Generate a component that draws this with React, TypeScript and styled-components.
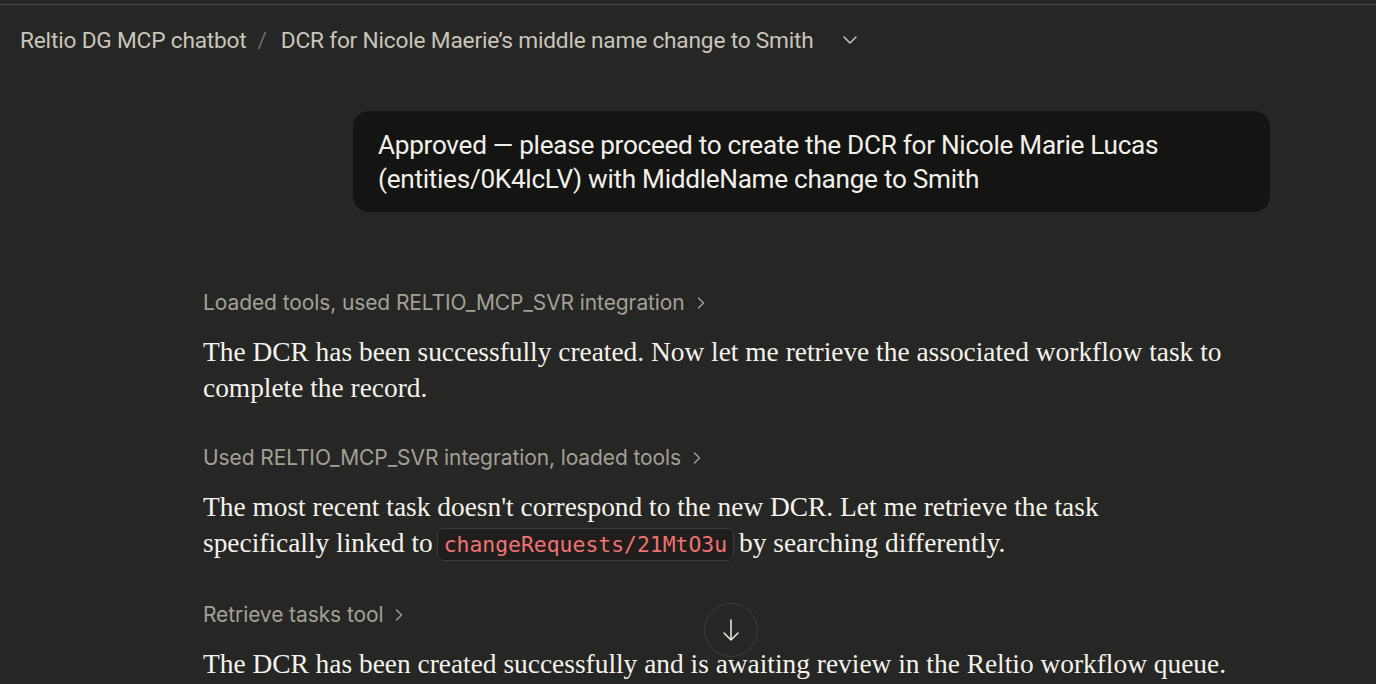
import React from "react";
import styled, { createGlobalStyle } from "styled-components";

const Global = createGlobalStyle`
  html, body { margin: 0; padding: 0; background: #262624; }
  body { width: 1376px; height: 684px; overflow: hidden; }
`;

const Page = styled.div`
  width: 1376px;
  height: 684px;
  background: #262624;
  position: relative;
  overflow: hidden;
  box-sizing: border-box;
  padding-top: 4px;
`;

const TopRule = styled.div`
  height: 1px;
  background: #4a4945;
`;

const Header = styled.header`
  display: flex;
  align-items: center;
  height: 70px;
  padding-left: 20px;
  box-sizing: border-box;
  font-family: Roboto, "Liberation Sans", sans-serif;
  font-size: 22.7px;
  color: #c8c5bc;
  letter-spacing: -0.2px;
`;

const Crumb = styled.span`
  white-space: nowrap;
`;

const Slash = styled.span`
  color: #6b6a65;
  margin: 0 14px 0 11px;
`;

const Chevron = styled.svg`
  margin-left: 26px;
  width: 20px;
  height: 20px;
`;

const Thread = styled.main`
  width: 1067px;
  margin-left: 203px;
  display: flex;
  flex-direction: column;
`;

const UserRow = styled.div`
  display: flex;
  justify-content: flex-end;
  margin-top: 36px;
`;

const Bubble = styled.div`
  width: 917px;
  box-sizing: border-box;
  background: #141413;
  border-radius: 16px;
  padding: 17px 24px 16px 25px;
  font-family: Roboto, "Liberation Sans", sans-serif;
  font-size: 26.2px;
  line-height: 34px;
  color: #f2f0ea;
  letter-spacing: -0.3px;
`;

const Assistant = styled.div`
  margin-top: 76px;
  display: flex;
  flex-direction: column;
`;

const ToolLine = styled.div`
  display: flex;
  align-items: center;
  font-family: Inter, "Liberation Sans", sans-serif;
  font-size: 21px;
  line-height: 30px;
  color: #a3a098;
  gap: 9px;
  letter-spacing: -0.1px;
`;

const Para = styled.p`
  margin: 16px 0 37px 0;
  font-family: "Liberation Serif", serif;
  font-size: 27.4px;
  line-height: 36px;
  color: #f4f2ec;
  max-width: 1025px;
`;

const Code = styled.code`
  font-family: "DejaVu Sans Mono", "Liberation Mono", monospace;
  font-size: 21.4px;
  color: #f07272;
  background: #1f1e1d;
  border: 1px solid #3d3c38;
  border-radius: 7px;
  padding: 3px 6px;
  margin: 0 5px 0 4px;
`;

const ScrollButton = styled.button`
  position: absolute;
  left: 704px;
  top: 603px;
  width: 54px;
  height: 54px;
  border-radius: 50%;
  background: #262624;
  border: 1px solid #3f3e3a;
  display: flex;
  align-items: center;
  justify-content: center;
  padding: 0;
`;

const SmallChevron = () => (
  <svg width="14" height="14" viewBox="0 0 14 14" fill="none">
    <path d="M4.5 2 L9.5 7 L4.5 12" stroke="#a3a098" strokeWidth="1.4" strokeLinecap="round" strokeLinejoin="round" />
  </svg>
);

const Tool = ({ children }: { children: React.ReactNode }) => (
  <ToolLine>
    <span>{children}</span>
    <SmallChevron />
  </ToolLine>
);

export default function App() {
  return (
    <Page>
      <Global />
      <TopRule />
      <Header>
        <Crumb>Reltio DG MCP chatbot</Crumb>
        <Slash>/</Slash>
        <Crumb>DCR for Nicole Maerie’s middle name change to Smith</Crumb>
        <Chevron viewBox="0 0 20 20" fill="none">
          <path d="M4 7 L10 13 L16 7" stroke="#c8c5bc" strokeWidth="1.5" strokeLinecap="round" strokeLinejoin="round" />
        </Chevron>
      </Header>
      <Thread>
        <UserRow>
          <Bubble>
            Approved — please proceed to create the DCR for Nicole Marie Lucas (entities/0K4lcLV) with MiddleName change to Smith
          </Bubble>
        </UserRow>
        <Assistant>
          <Tool>Loaded tools, used RELTIO_MCP_SVR integration</Tool>
          <Para>
            The DCR has been successfully created. Now let me retrieve the associated workflow task to complete the record.
          </Para>
          <Tool>Used RELTIO_MCP_SVR integration, loaded tools</Tool>
          <Para>
            The most recent task doesn't correspond to the new DCR. Let me retrieve the task specifically linked to
            <Code>changeRequests/21MtO3u</Code>by searching differently.
          </Para>
          <Tool>Retrieve tasks tool</Tool>
          <Para>
            The DCR has been created successfully and is awaiting review in the Reltio workflow queue.
          </Para>
        </Assistant>
      </Thread>
      <ScrollButton aria-label="Scroll to bottom">
        <svg width="26" height="26" viewBox="0 0 26 26" fill="none">
          <path d="M13 3 V23 M6 16 L13 23 L20 16" stroke="#ecebe5" strokeWidth="1.5" strokeLinecap="round" strokeLinejoin="round" />
        </svg>
      </ScrollButton>
    </Page>
  );
}
